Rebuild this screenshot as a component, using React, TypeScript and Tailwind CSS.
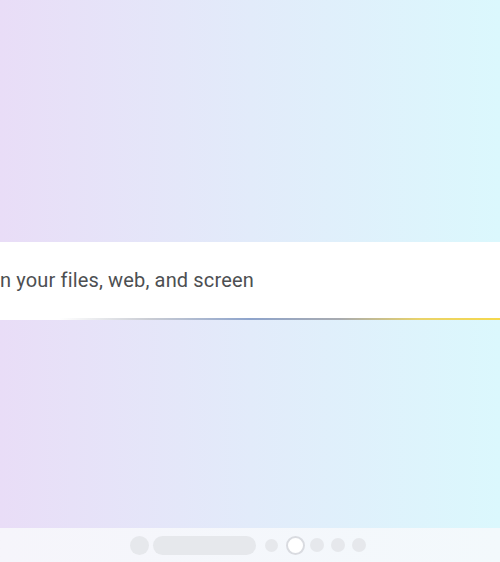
/**
 * App — 搜索栏覆盖层截图复刻
 */

const DOT = 'rounded-full bg-[#e6e8ec]';

export default function App() {
  return (
    <div className="w-[500px] h-[562px] overflow-hidden flex flex-col bg-gradient-to-r from-[#e9ddf7] via-[#e2ebfa] to-[#dbf8fd]">
      <div className="h-[242px] shrink-0" />

      <div className="shrink-0 bg-white flex flex-col">
        <div className="h-[76px] flex items-center">
          <span
            className="text-[20px] leading-none text-[#4d4f52] tracking-[0.15px]"
            style={{ fontFamily: 'Roboto, "Open Sans", sans-serif' }}
          >
            n your files, web, and screen
          </span>
        </div>
        <div className="h-[2px] bg-[linear-gradient(90deg,#ffffff_12%,#c9ccd4_30%,#8ea4cc_50%,#a8abb0_68%,#e9d36a_84%,#f5d84c_100%)]" />
      </div>

      <div className="flex-1" />

      <div className="h-[34px] shrink-0 bg-gradient-to-r from-[#f6f5fb] to-[#f3f9fc] flex items-center">
        <div className="ml-[130px] w-[19px] h-[19px] rounded-full bg-[#e6e8ec]" />
        <div className="ml-[4px] w-[103px] h-[19px] rounded-full bg-[#e6e8ec]" />
        <div className={`ml-[9px] w-[13px] h-[13px] ${DOT}`} />
        <div className="ml-[8px] w-[19px] h-[19px] rounded-full border-2 border-[#d9dbe0] bg-white" />
        <div className={`ml-[5px] w-[14px] h-[14px] ${DOT}`} />
        <div className={`ml-[7px] w-[14px] h-[14px] ${DOT}`} />
        <div className={`ml-[7px] w-[14px] h-[14px] ${DOT}`} />
      </div>
    </div>
  );
}
